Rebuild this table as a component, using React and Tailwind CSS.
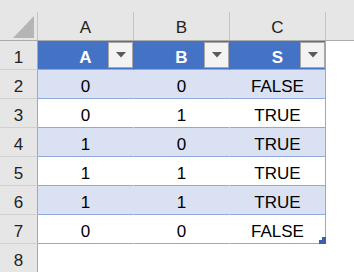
import React from 'react';

const COLS = ['A', 'B', 'C'];
const HEAD = ['A', 'B', 'S'];
const ROWS = [
    [0, 0, 'FALSE'],
    [0, 1, 'TRUE'],
    [1, 0, 'TRUE'],
    [1, 1, 'TRUE'],
    [1, 1, 'TRUE'],
    [0, 0, 'FALSE'],
];

function FilterButton() {
    return (
        <div className="absolute right-0 top-[1px] w-[25px] h-[26px] border border-[#a6a6a6] bg-[#f3f3f3] flex items-center justify-center">
            <svg width="10" height="6" viewBox="0 0 10 6">
                <path d="M0 0 H10 L5 5.5 Z" fill="#5a5a5a" />
            </svg>
        </div>
    );
}

function RowNumber({ n }) {
    return (
        <div className="w-[38px] shrink-0 bg-[#e6e6e6] border-r border-b border-r-[#a8a8a8] border-b-[#d0d0d0] flex items-end justify-center pb-[1px] leading-[20px] text-[#222]">
            {n}
        </div>
    );
}

export default function App() {
    return (
        <div className="w-[354px] h-[272px] overflow-hidden bg-white font-['Liberation_Sans',Arial,sans-serif] text-[17px] text-black">
            {/* column letters */}
            <div className="flex h-[41px] bg-[#e6e6e6] border-b border-[#ababab]">
                <div className="w-[38px] shrink-0 pt-[12px]">
                    <div className="h-full border-r border-[#c4c4c4] flex items-end justify-end pr-[3px] pb-[2px]">
                        <svg width="21" height="22" viewBox="0 0 21 22">
                            <path d="M0 22 L21 22 L21 0 Z" fill="#b5b5b5" />
                        </svg>
                    </div>
                </div>
                {COLS.map((c) => (
                    <div key={c} className="w-[96px] shrink-0 pt-[12px]">
                        <div className="h-full border-r border-[#c4c4c4] flex items-end justify-center pb-[2px] leading-[20px] text-[#222]">
                            {c}
                        </div>
                    </div>
                ))}
                <div className="flex-1" />
            </div>

            {/* table header row */}
            <div className="flex h-[29px]">
                <RowNumber n={1} />
                {HEAD.map((h, i) => (
                    <div
                        key={i}
                        className={`relative w-[96px] shrink-0 bg-[#4472c4] border-b border-r border-b-[#8ea9db] ${i === 2 ? 'border-r-[#8ea9db]' : 'border-r-[#4472c4]'} flex items-end justify-center pb-[1px] leading-[20px] font-bold text-white`}
                    >
                        {h}
                        <FilterButton />
                    </div>
                ))}
            </div>

            {ROWS.map((r, ri) => (
                <div key={ri} className="flex h-[29px]">
                    <RowNumber n={ri + 2} />
                    {r.map((v, ci) => (
                        <div
                            key={ci}
                            className={`relative w-[96px] shrink-0 ${ri % 2 === 0 ? 'bg-[#d9e1f2]' : 'bg-white'} border-b border-r border-b-[#8ea9db] ${ci === 2 ? 'border-r-[#8ea9db]' : ri % 2 === 0 ? 'border-r-[#d9e1f2]' : 'border-r-white'} flex items-end justify-center pb-[1px] leading-[20px]`}
                        >
                            {v}
                            {ri === ROWS.length - 1 && ci === 2 && (
                                <svg className="absolute -right-[1px] -bottom-[1px]" width="7" height="7" viewBox="0 0 7 7">
                                    <path d="M0 3 H3 V0 H7 V7 H0 Z" fill="#3d5daf" />
                                </svg>
                            )}
                        </div>
                    ))}
                </div>
            ))}

            <div className="flex h-[29px]">
                <RowNumber n={8} />
            </div>
        </div>
    );
}
